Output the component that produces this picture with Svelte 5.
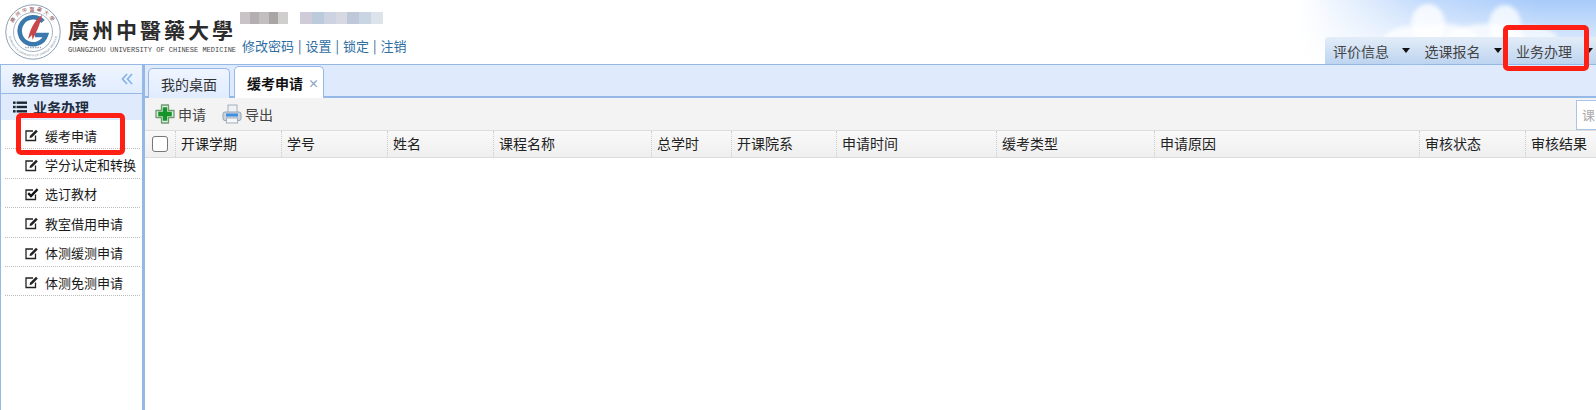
<script>
	const links = ['修改密码', '设置', '锁定', '注销'];
	const topMenus = ['评价信息', '选课报名', '业务办理'];
	const sideItems = [
		{ label: '缓考申请', icon: 'edit' },
		{ label: '学分认定和转换', icon: 'edit' },
		{ label: '选订教材', icon: 'check' },
		{ label: '教室借用申请', icon: 'edit' },
		{ label: '体测缓测申请', icon: 'edit' },
		{ label: '体测免测申请', icon: 'edit' }
	];
	const columns = [
		{ label: '开课学期', width: 106 },
		{ label: '学号', width: 106 },
		{ label: '姓名', width: 106 },
		{ label: '课程名称', width: 158 },
		{ label: '总学时', width: 80 },
		{ label: '开课院系', width: 105 },
		{ label: '申请时间', width: 160 },
		{ label: '缓考类型', width: 158 },
		{ label: '申请原因', width: 265 },
		{ label: '审核状态', width: 106 },
		{ label: '审核结果', width: 106 }
	];
	const mosaicA = ['#c9c3c6', '#b3aeb1', '#c2bdbf', '#a9a4a6', '#cfd0ce'];
	const mosaicB = ['#cfcbd9', '#bccbdc', '#cdd3e0', '#d6d9e2', '#bfc8d9', '#c9d5e2', '#dde3ea'];
</script>

<div class="page">
	<header class="top">
		<svg class="sky" width="300" height="64" viewBox="0 0 300 64">
			<g fill="#fff">
				<ellipse cx="132" cy="24" rx="17" ry="20" opacity="0.8" />
				<ellipse cx="115" cy="44" rx="30" ry="18" opacity="0.75" />
				<ellipse cx="150" cy="42" rx="32" ry="18" opacity="0.75" />
				<ellipse cx="209" cy="24" rx="16" ry="19" opacity="0.75" />
				<ellipse cx="190" cy="40" rx="40" ry="16" opacity="0.75" />
				<ellipse cx="232" cy="40" rx="30" ry="14" opacity="0.65" />
			</g>
		</svg>

		<svg class="logo" width="56" height="56" viewBox="0 0 56 56">
			<defs>
				<path id="ring-top" d="M6.5 28 A21.5 21.5 0 0 1 49.5 28" />
				<path id="ring-bottom" d="M3.5 28 A24.5 24.5 0 0 0 52.5 28" />
			</defs>
			<circle cx="28" cy="28" r="27.2" fill="#fff" stroke="#8ba0b8" stroke-width="1" />
			<circle cx="28" cy="28" r="19.5" fill="#fff" stroke="#8ba0b8" stroke-width="0.8" />
			<text class="ring-cn"><textPath href="#ring-top" startOffset="50%" text-anchor="middle">廣州中醫藥大學</textPath></text>
			<text class="ring-en"><textPath href="#ring-bottom" startOffset="50%" text-anchor="middle">GUANGZHOU UNIVERSITY OF CHINESE MEDICINE</textPath></text>
			<path d="M38 17.5 A13.5 13.5 0 1 0 41 31 L30 31" fill="none" stroke="#3a78ad" stroke-width="4.5" />
			<path d="M37 11 C31 15 26 22 23 35 L27 31 L27.5 36 C31 29 35 21 37 11 Z" fill="#c8454a" />
			<path d="M20 43.5 H36" stroke="#9aa8b8" stroke-width="1.5" stroke-dasharray="1.5 1" />
		</svg>

		<div class="brand">
			<div class="brand-cn">廣州中醫藥大學</div>
			<div class="brand-en">GUANGZHOU UNIVERSITY OF CHINESE MEDICINE</div>
		</div>

		<div class="user">
			<div class="names">
				<div class="mosaic first">
					{#each mosaicA as c}<i style={`background:${c}`}></i>{/each}
				</div>
				<div class="mosaic second">
					{#each mosaicB as c}<i style={`background:${c}`}></i>{/each}
				</div>
			</div>
			<div class="links">
				{#each links as link, i}
					{#if i > 0}<span class="sep">|</span>{/if}
					<span>{link}</span>
				{/each}
			</div>
		</div>

		<nav class="top-menu">
			{#each topMenus as menu}
				<div class="top-item">{menu}<span class="caret"></span></div>
			{/each}
		</nav>
	</header>

	<div class="main">
		<aside class="side">
			<div class="side-title">
				<span>教务管理系统</span>
				<svg width="12" height="12" viewBox="0 0 12 12" fill="none" stroke="#7fb0e8" stroke-width="1.6">
					<path d="M6 1 L1.5 6 L6 11 M11 1 L6.5 6 L11 11" />
				</svg>
			</div>
			<div class="side-group">
				<svg width="14" height="12" viewBox="0 0 14 12" fill="#1c2733">
					<rect x="0" y="0.5" width="2.6" height="2.4" />
					<rect x="3.6" y="0.5" width="10.4" height="2.4" />
					<rect x="0" y="4.8" width="2.6" height="2.4" />
					<rect x="3.6" y="4.8" width="10.4" height="2.4" />
					<rect x="0" y="9.1" width="2.6" height="2.4" />
					<rect x="3.6" y="9.1" width="10.4" height="2.4" />
				</svg>
				<span>业务办理</span>
			</div>
			<ul class="side-list">
				{#each sideItems as item}
					<li>
						<svg width="14" height="14" viewBox="0 0 14 14" fill="none">
							<path d="M10.5 7.5 V12.5 H1 V3 H8" stroke="#222" stroke-width="1.3" />
							{#if item.icon === 'edit'}
								<path d="M5 7.8 L11 1.8 L12.8 3.6 L6.8 9.6 L4.6 10 Z" fill="#222" />
							{:else}
								<path d="M3.2 6.2 L6 9 L12.6 2.2" stroke="#111" stroke-width="2.4" />
							{/if}
						</svg>
						<span>{item.label}</span>
					</li>
				{/each}
			</ul>
		</aside>

		<section class="content">
			<div class="tabs">
				<div class="tab">我的桌面</div>
				<div class="tab active">缓考申请<span class="close">×</span></div>
			</div>
			<div class="panel">
				<div class="toolbar">
					<div class="tool">
						<svg width="20" height="20" viewBox="0 0 20 20">
							<path d="M6.5 1 H13.5 V6.5 H19 V13.5 H13.5 V19 H6.5 V13.5 H1 V6.5 H6.5 Z" fill="#dfeee0" stroke="#6f9a74" stroke-width="1.3" stroke-linejoin="round" />
							<path d="M7.8 3.2 H12.2 V7.8 H16.8 V12.2 H12.2 V16.8 H7.8 V12.2 H3.2 V7.8 H7.8 Z" fill="#17952b" />
						</svg>
						<span>申请</span>
					</div>
					<div class="tool">
						<svg width="20" height="20" viewBox="0 0 20 20">
							<rect x="6" y="1" width="9" height="8" fill="#eef1f5" stroke="#a3afbd" />
							<rect x="1" y="8" width="18" height="8.5" rx="2" fill="#ccd5df" stroke="#94a2b2" />
							<rect x="4" y="9.5" width="12" height="3" fill="#3f8fe0" />
							<rect x="4.5" y="14" width="11" height="5" fill="#f5f6f8" stroke="#a3afbd" />
						</svg>
						<span>导出</span>
					</div>
					<div class="search">课</div>
				</div>
				<div class="thead">
					<div class="check-cell"><span class="check"></span></div>
					{#each columns as col}
						<div class="th" style={`width:${col.width}px`}>{col.label}</div>
					{/each}
				</div>
			</div>
		</section>
	</div>

	<div class="mark mark-menu"></div>
	<div class="mark mark-side"></div>
</div>

<style>
	:global(body) {
		margin: 0;
		background: #fff;
	}

	.page {
		position: relative;
		width: 1596px;
		height: 410px;
		overflow: hidden;
		font-family: "Noto Sans CJK SC", "Noto Sans", sans-serif;
		font-size: 13px;
		color: #222;
		display: flex;
		flex-direction: column;
	}

	.top {
		position: relative;
		height: 64px;
		flex-shrink: 0;
		display: flex;
		background:
			linear-gradient(to bottom, rgba(255, 255, 255, 0) 0%, rgba(255, 255, 255, 0.9) 100%),
			linear-gradient(to right, #fff 1300px, #c5dcfc 1420px, #a7cbfa 1540px);
	}

	.sky {
		position: absolute;
		top: 0;
		right: 0;
		filter: blur(2px);
	}

	.logo {
		margin: 4px 0 0 5px;
		position: relative;
	}

	.ring-cn {
		font-size: 5px;
		letter-spacing: 2px;
		fill: #8a4a50;
	}

	.ring-en {
		font-family: "Liberation Sans", sans-serif;
		font-size: 2.8px;
		fill: #6d7f94;
	}

	.brand {
		margin: 14px 0 0 7px;
		width: 166px;
	}

	.brand-cn {
		font-family: "Noto Sans CJK TC", sans-serif;
		font-size: 21px;
		line-height: 30px;
		font-weight: 700;
		letter-spacing: 3px;
		color: #2b2b2b;
		white-space: nowrap;
	}

	.brand-en {
		font-family: "Liberation Mono", monospace;
		font-size: 7px;
		line-height: 9px;
		color: #444;
		white-space: nowrap;
		margin-top: 2px;
	}

	.user {
		margin-left: 8px;
		padding-top: 12px;
	}

	.names {
		display: flex;
		gap: 12px;
		height: 12px;
		margin-left: -2px;
	}

	.mosaic {
		display: flex;
	}

	.mosaic i {
		flex: 1;
	}

	.mosaic.first {
		width: 48px;
	}

	.mosaic.second {
		width: 83px;
	}

	.links {
		margin-top: 13px;
		font-size: 13px;
		line-height: 18px;
		color: #2d6d9f;
		white-space: nowrap;
		display: flex;
		gap: 4px;
	}

	.sep {
		color: #2d5f8f;
	}

	.top-menu {
		position: relative;
		margin: 37px 0 0 auto;
		height: 27px;
		display: flex;
		border-radius: 4px 0 0 0;
		background: linear-gradient(to bottom, #e3edf8, #bdd4f0);
		padding-left: 8px;
	}

	.top-item {
		display: flex;
		align-items: center;
		font-size: 14px;
		color: #444;
		width: 91.5px;
		white-space: nowrap;
	}

	.top-item:last-child {
		width: 80px;
	}

	.caret {
		margin-left: 13px;
		border-left: 4.5px solid transparent;
		border-right: 4.5px solid transparent;
		border-top: 5px solid #111;
	}

	.main {
		flex: 1;
		display: flex;
		border-top: 1px solid #95b8e7;
	}

	.side {
		width: 142px;
		box-sizing: border-box;
		flex-shrink: 0;
		border-left: 1px solid #95b8e7;
	}

	.side-title {
		height: 29px;
		box-sizing: border-box;
		padding: 0 9px 0 11px;
		display: flex;
		align-items: center;
		justify-content: space-between;
		background: linear-gradient(to bottom, #eff5ff, #e0ecff);
		border-bottom: 1px solid #95b8e7;
		font-size: 14px;
		font-weight: 700;
		color: #1f2d3d;
	}

	.side-group {
		height: 26px;
		display: flex;
		align-items: center;
		gap: 6px;
		padding-left: 12px;
		background: #dfebfd;
		font-size: 14px;
		font-weight: 700;
		color: #1f2d3d;
	}

	.side-list {
		list-style: none;
		margin: 0;
		padding: 0 2px 0 4px;
	}

	.side-list li {
		height: 29.4px;
		box-sizing: border-box;
		display: flex;
		align-items: center;
		gap: 6px;
		padding: 2px 0 0 20px;
		border-bottom: 1px dotted #bbb;
		white-space: nowrap;
		color: #1a1a1a;
	}

	.content {
		flex: 1;
		min-width: 0;
		border-left: 3px solid #95b8e7;
		display: flex;
		flex-direction: column;
	}

	.tabs {
		height: 33px;
		flex-shrink: 0;
		box-sizing: border-box;
		display: flex;
		align-items: flex-end;
		gap: 4px;
		padding-left: 3px;
		background: #dfebfd;
		border-bottom: 2px solid #95b8e7;
	}

	.tab {
		height: 30px;
		width: 82px;
		box-sizing: border-box;
		margin-bottom: -2px;
		display: flex;
		align-items: center;
		justify-content: center;
		border: 1px solid #95b8e7;
		border-bottom: 0;
		border-radius: 5px 5px 0 0;
		background: linear-gradient(to bottom, #eff5ff, #e0ecff);
		font-size: 14px;
		color: #333;
	}

	.tab.active {
		width: 90px;
		background: #fff;
		height: 32px;
		font-weight: 700;
		color: #111;
		justify-content: flex-start;
		padding-left: 12px;
	}

	.close {
		color: #8aa4c4;
		font-size: 11px;
		font-weight: 700;
		margin-left: 5px;
	}

	.panel {
		flex: 1;
		display: flex;
		flex-direction: column;
	}

	.toolbar {
		height: 33px;
		flex-shrink: 0;
		display: flex;
		align-items: center;
		gap: 16px;
		padding-left: 10px;
		background: #f3f3f3;
		border-bottom: 1px solid #ddd;
		position: relative;
		box-sizing: border-box;
		font-size: 14px;
	}

	.tool {
		display: flex;
		align-items: center;
		gap: 3px;
		color: #444;
	}

	.search {
		margin-left: auto;
		width: 20px;
		height: 30px;
		box-sizing: border-box;
		border: 1px solid #a9c4ea;
		border-right: 0;
		background: #fff;
		color: #aaa;
		padding-left: 5px;
		line-height: 28px;
		overflow: hidden;
		margin-top: 1px;
		font-size: 13px;
	}

	.thead {
		height: 27px;
		flex-shrink: 0;
		box-sizing: border-box;
		display: flex;
		background: linear-gradient(to bottom, #f9f9f9, #efefef);
		border-bottom: 1px solid #ddd;
		font-size: 14px;
	}

	.check-cell {
		width: 30px;
		flex-shrink: 0;
		display: flex;
		align-items: center;
		justify-content: center;
	}

	.check {
		width: 14px;
		height: 14px;
		border: 1px solid #777;
		border-radius: 3px;
		background: #fff;
	}

	.th {
		flex-shrink: 0;
		box-sizing: border-box;
		display: flex;
		align-items: center;
		padding: 0 0 2px 5px;
		border-left: 1px dotted #ccc;
		color: #222;
		white-space: nowrap;
	}

	.mark {
		position: absolute;
		box-sizing: border-box;
		border: 5px solid #ff1f14;
		border-radius: 5px;
		pointer-events: none;
	}

	.mark-menu {
		left: 1503px;
		top: 25px;
		width: 86px;
		height: 46px;
	}

	.mark-side {
		left: 16px;
		top: 113px;
		width: 109px;
		height: 42px;
	}
</style>
